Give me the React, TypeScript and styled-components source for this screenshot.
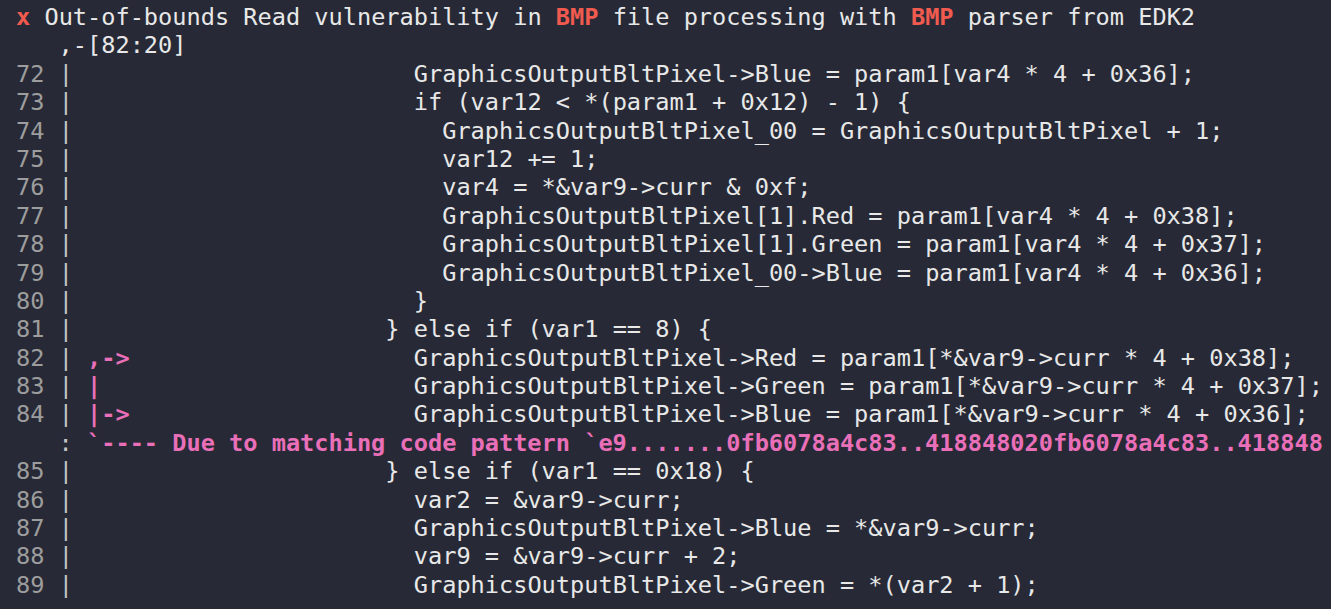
import React from "react";
import styled, { createGlobalStyle } from "styled-components";

const GlobalStyle = createGlobalStyle`
  html, body {
    margin: 0;
    padding: 0;
    background: #272a36;
    height: 100%;
    overflow: hidden;
  }
  #root { height: 100%; }
`;

const Terminal = styled.div`
  box-sizing: border-box;
  height: 100%;
  width: 100%;
  overflow: hidden;
  background: #272a36;
  padding: 3px 0 0 16px;
  font-family: "DejaVu Sans Mono", "Liberation Mono", monospace;
  font-size: 23.6px;
  color: #e8e8e8;
  display: flex;
  flex-direction: column;
`;

const Row = styled.div`
  height: 28.4px;
  line-height: 28.4px;
  white-space: pre;
  overflow: visible;
`;

const Num = styled.span`
  color: #9d9d9d;
`;

const Pipe = styled.span`
  color: #c4c4c4;
`;

const Accent = styled.span<{ $tone: "red" | "pink" }>`
  color: ${(p) => (p.$tone === "red" ? "#f05a4f" : "#ea6fb9")};
  font-weight: bold;
`;

const Code = styled.span`
  color: #e8e8e8;
`;

type Line = { n: number; col: number; code: string; marker?: string };

const lines: Line[] = [
  { n: 72, col: 28, code: "GraphicsOutputBltPixel->Blue = param1[var4 * 4 + 0x36];" },
  { n: 73, col: 28, code: "if (var12 < *(param1 + 0x12) - 1) {" },
  { n: 74, col: 30, code: "GraphicsOutputBltPixel_00 = GraphicsOutputBltPixel + 1;" },
  { n: 75, col: 30, code: "var12 += 1;" },
  { n: 76, col: 30, code: "var4 = *&var9->curr & 0xf;" },
  { n: 77, col: 30, code: "GraphicsOutputBltPixel[1].Red = param1[var4 * 4 + 0x38];" },
  { n: 78, col: 30, code: "GraphicsOutputBltPixel[1].Green = param1[var4 * 4 + 0x37];" },
  { n: 79, col: 30, code: "GraphicsOutputBltPixel_00->Blue = param1[var4 * 4 + 0x36];" },
  { n: 80, col: 28, code: "}" },
  { n: 81, col: 26, code: "} else if (var1 == 8) {" },
  { n: 82, col: 28, code: "GraphicsOutputBltPixel->Red = param1[*&var9->curr * 4 + 0x38];", marker: ",->" },
  { n: 83, col: 28, code: "GraphicsOutputBltPixel->Green = param1[*&var9->curr * 4 + 0x37];", marker: "|" },
  { n: 84, col: 28, code: "GraphicsOutputBltPixel->Blue = param1[*&var9->curr * 4 + 0x36];", marker: "|->" },
];

const tail: Line[] = [
  { n: 85, col: 26, code: "} else if (var1 == 0x18) {" },
  { n: 86, col: 28, code: "var2 = &var9->curr;" },
  { n: 87, col: 28, code: "GraphicsOutputBltPixel->Blue = *&var9->curr;" },
  { n: 88, col: 28, code: "var9 = &var9->curr + 2;" },
  { n: 89, col: 28, code: "GraphicsOutputBltPixel->Green = *(var2 + 1);" },
];

const SourceRow: React.FC<{ line: Line }> = ({ line }) => {
  const marker = line.marker ?? "";
  const pad = " ".repeat(line.col - 5 - marker.length);
  return (
    <Row>
      <Num>{String(line.n).padStart(2, " ")}</Num>
      <Pipe>{" | "}</Pipe>
      {marker && <Accent $tone="pink">{marker}</Accent>}
      <Code>{pad}{line.code}</Code>
    </Row>
  );
};

export default function App() {
  return (
    <>
      <GlobalStyle />
      <Terminal>
        <Row>
          <Accent $tone="red">x</Accent>
          <Code>{" Out-of-bounds Read vulnerability in "}</Code>
          <Accent $tone="red">BMP</Accent>
          <Code>{" file processing with "}</Code>
          <Accent $tone="red">BMP</Accent>
          <Code>{" parser from EDK2"}</Code>
        </Row>
        <Row>
          <Code>{"   ,-[82:20]"}</Code>
        </Row>
        {lines.map((l) => (
          <SourceRow key={l.n} line={l} />
        ))}
        <Row>
          <Pipe>{"   : "}</Pipe>
          <Accent $tone="pink">
            {"`---- Due to matching code pattern `e9.......0fb6078a4c83..418848020fb6078a4c83..418848"}
          </Accent>
        </Row>
        {tail.map((l) => (
          <SourceRow key={l.n} line={l} />
        ))}
      </Terminal>
    </>
  );
}
